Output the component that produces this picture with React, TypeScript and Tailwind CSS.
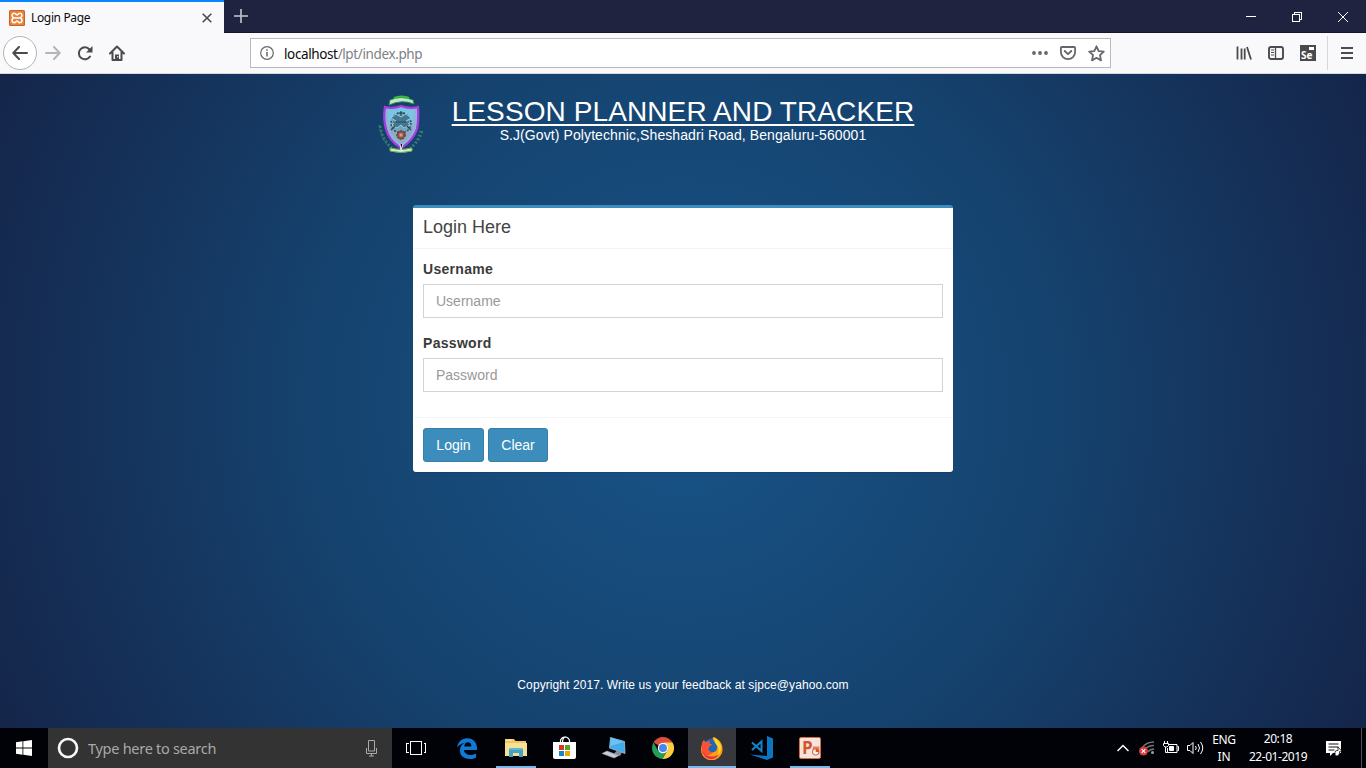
import React from "react";

type P = { className?: string; children: React.ReactNode };

const Task = ({ className = "", children }: P) => (
  <div className={`flex h-10 w-12 shrink-0 items-center justify-center ${className}`}>{children}</div>
);

const Running = ({ children }: { children: React.ReactNode }) => (
  <div className="flex h-10 w-12 shrink-0 flex-col items-center">
    <div className="flex h-[38px] items-center pt-0.5">{children}</div>
    <div className="h-0.5 w-10 bg-[#76b9ed]" />
  </div>
);

const TabStrip = () => (
  <div className="flex h-[33px] shrink-0 border-b border-[#15152a] bg-[#202340]">
    <div className="flex h-[33px] w-[224px] items-center border-t-2 border-[#0a84ff] bg-[#f9f9fb] pl-[9px]">
      <svg width="16" height="16" viewBox="0 0 16 16">
        <rect width="16" height="16" rx="1.5" fill="#c96327" />
        <rect x="1" y="1" width="14" height="14" rx="1" fill="#e8833a" />
        <path d="M5.2 7.8C2 6.8 2.6 3.2 5.2 3.3c1.7 0 1.8 1.5 2.8 1.5s1.100-1.500 2.800-1.500c2.600-.1 3.200 3.500 0 4.500 3.200 1 2.600 4.900 0 4.900-1.700 0-1.800-1.600-2.800-1.600s-1.100 1.600-2.800 1.600c-2.600 0-3.200-3.900 0-4.900ZM6 8h4" fill="none" stroke="#fff" strokeWidth="1.500" />
      </svg>
      <span className="ml-[6px] w-[160px] text-[12px] tracking-[-0.35px] text-[#0c0c0d]">Login Page</span>
      <svg className="ml-[11px]" width="10" height="10" viewBox="0 0 10 10">
        <path d="M.7.7l8.600 8.600M9.300.7L.7 9.300" stroke="#4a4a50" strokeWidth="1.600" />
      </svg>
    </div>
    <div className="flex w-8 items-center justify-center pl-0.5">
      <svg width="14" height="14" viewBox="0 0 14 14">
        <path d="M7 0v14M0 7h14" stroke="#c6c7d2" strokeWidth="1.600" />
      </svg>
    </div>
    <div className="flex-1" />
    <div className="flex items-center text-white">
      <svg className="w-[46px]" height="33" viewBox="0 0 46 33">
        <path d="M18 16.500h10" stroke="white" shapeRendering="crispEdges" />
      </svg>
      <svg className="w-[46px]" height="33" viewBox="0 0 46 33">
        <path d="M18.500 14.500h7v7h-7zM20.500 14v-1.500h7v7H26" fill="none" stroke="white" shapeRendering="crispEdges" />
      </svg>
      <svg className="w-[46px]" height="33" viewBox="0 0 46 33">
        <path d="M18 12l10 10M28 12l-10 10" stroke="white" />
      </svg>
    </div>
  </div>
);

const Toolbar = () => (
  <div className="flex h-[41px] shrink-0 items-center border-b border-[#d8d9dd] bg-[#f9f9fb]">
    <div className="flex w-[250px] items-center pl-[3px]">
      <div className="flex size-[34px] items-center justify-center rounded-full border border-[#b4b4b8] bg-white">
        <svg width="16" height="14" viewBox="0 0 16 14">
          <path d="M15 7H1.500M7 1L1.300 7 7 13" fill="none" stroke="#4a4a4f" strokeWidth="2" strokeLinecap="round" strokeLinejoin="round" />
        </svg>
      </div>
      <svg className="ml-2" width="16" height="14" viewBox="0 0 16 14">
        <path d="M1 7h13.500M9 1l5.700 6L9 13" fill="none" stroke="#b5b5b9" strokeWidth="2" strokeLinecap="round" strokeLinejoin="round" />
      </svg>
      <svg className="ml-[16px]" width="16" height="16" viewBox="0 0 16 16">
        <path d="M13 11.500A6 6 0 1 1 12.500 4.500" fill="none" stroke="#4a4a4f" strokeWidth="2" strokeLinecap="round" />
        <path d="M15.500 1v6.500H9z" fill="#4a4a4f" />
      </svg>
      <svg className="ml-[16px]" width="16" height="16" viewBox="0 0 16 16">
        <path d="M1 8.500L8 1.500l7 7M3.500 7.500V15h9V7.500" fill="none" stroke="#4a4a4f" strokeWidth="2" strokeLinecap="round" strokeLinejoin="round" />
        <path d="M6 9.500h4V15H6z" fill="#4a4a4f" />
        <path d="M8.300 11h1v1.500h-1z" fill="#fff" />
      </svg>
    </div>
    <div className="flex h-[30px] w-[861px] items-center border border-[#b9b9be] bg-white pl-[9px] pr-[5px]">
      <svg width="14" height="14" viewBox="0 0 14 14">
        <circle cx="7" cy="7" r="6.300" fill="none" stroke="#66666b" strokeWidth="1.200" />
        <path d="M7 6v4.500M7 3.200v1.600" stroke="#66666b" strokeWidth="1.500" />
      </svg>
      <span className="ml-[10px] flex-1 pt-[2px] text-[13.500px] tracking-[-0.380px] text-[#808085]">
        <span className="text-[#0c0c0d]">localhost</span>/lpt/index.php
      </span>
      <svg width="16" height="16" viewBox="0 0 16 16" fill="#66666b">
        <circle cx="2" cy="8" r="1.900" />
        <circle cx="8" cy="8" r="1.900" />
        <circle cx="14" cy="8" r="1.900" />
      </svg>
      <svg className="ml-3" width="16" height="16" viewBox="0 0 16 16" fill="none" stroke="#66666b" strokeWidth="1.800" strokeLinejoin="round" strokeLinecap="round">
        <path d="M1.800 2h12.400q.9 0 .9.900V7A7.100 7.100 0 0 1 .9 7V2.900Q.9 2 1.800 2zM4.700 6L8 9.200 11.300 6" />
      </svg>
      <svg className="ml-3" width="17" height="17" viewBox="0 0 17 17" fill="none" stroke="#66666b" strokeWidth="1.800" strokeLinejoin="round">
        <path d="M8.500 1.300l2.200 4.800 5.100.6-3.800 3.500 1 5.200-4.500-2.600L4 15.400l1-5.200-3.800-3.500 5.100-.6z" />
      </svg>
    </div>
    <div className="flex flex-1 items-center pl-[125px]">
      <svg width="16" height="16" viewBox="0 0 16 16" stroke="#4a4a4f" strokeWidth="1.800">
        <path d="M1.500 1.500v13M5.500 3.500v11M8.700 3.500v11M11 2l4 12.500" />
      </svg>
      <svg className="ml-4" width="16" height="16" viewBox="0 0 16 16" fill="none" stroke="#4a4a4f">
        <rect x="1" y="2" width="14" height="12" rx="2" strokeWidth="1.900" />
        <path d="M7.500 2v12" strokeWidth="1.300" />
        <path d="M3 5h3M3 7.500h3M3 10h3" />
      </svg>
      <div className="ml-4 flex size-4 flex-col items-start bg-[#4a4a4d]">
        <div className="ml-[9px] mt-[2px] h-[3px] w-[5px] shrink-0 bg-white" />
        <span className="ml-px font-['Open_Sans',sans-serif] text-[10px] font-bold leading-[11px] text-white">Se</span>
      </div>
      <div className="ml-[11px] h-[34px] w-px bg-[#d7d7db]" />
      <svg className="ml-[13px]" width="12" height="14" viewBox="0 0 12 14" stroke="#4a4a4f" strokeWidth="2">
        <path d="M0 2h12M0 7h12M0 12h12" />
      </svg>
    </div>
  </div>
);

const Crest = () => (
  <svg width="46" height="60" viewBox="0 0 46 60">
    <path d="M12 5q11-5 23 0l1 4q-12-5-25 1z" fill="#bfe6ce" stroke="#2e9445" />
    <path d="M16 3q8-3 15 0" fill="none" stroke="#38bd3c" strokeWidth="2" />
    <path d="M7 12q8 2 16-1 9 3 17 1 1 12-1 22-4 12-16 19-12-7-15-19-3-11-1-22z" fill="#8fb4d8" stroke="#a43de0" strokeWidth="2.300" />
    <path d="M10 15q7 1 13-2 7 3 13 2l-1 13q-10-7-24 1z" fill="#75c9e8" />
    <path d="M11 31q12 7 25-1-1 11-13 19Q12 40 11 31z" fill="#93a8c4" />
    <circle cx="23" cy="28" r="10" fill="#6fa5bd" stroke="#2c5268" strokeWidth="1.500" strokeDasharray="2 1.500" />
    <path d="M13 23l5-4 5 3 5-3 5 4-5 3 4 4-6 3-3-3-4 3-5-3 4-4z" fill="#3f7794" stroke="#b2d3d8" strokeWidth=".8" />
    <path d="M19 18h8M23 16v5M13 35l4-4M33 35l-4-4M15 27h16" stroke="#28495a" strokeWidth="1.200" />
    <circle cx="23" cy="40" r="4.200" fill="#8b5547" stroke="#44292d" strokeDasharray="2 1" />
    <path d="M21.500 38.500h3v3h-3z" fill="#d39d89" />
    <path d="M2 31q2 14 12 22M44 36q-3 11-12 17" fill="none" stroke="#377e67" strokeWidth="2.800" strokeDasharray="2 2" />
    <path d="M1 30q2 14 11 23M42 36q-3 11-10 17" fill="none" stroke="#50998a" strokeDasharray="1 3" />
    <path d="M12 53q11 3 22 0v3q-11 3-22 0z" fill="#d7eadf" stroke="#6bae46" />
    <path d="M22 49l1 6 2-6" stroke="#e8f5ff" />
  </svg>
);

const Field = ({ label, type }: { label: string; type: string }) => (
  <div className="flex flex-col">
    <label className="mb-[5px] text-[14px] font-bold leading-5 tracking-[0.3px] text-[#3a3a3a]">{label}</label>
    <input
      type={type}
      placeholder={label}
      className="h-[34px] w-full border border-[#d2d3d8] bg-white px-3 text-[14px] text-[#555] outline-none placeholder:text-[#999] placeholder:opacity-100"
    />
  </div>
);

const Page = () => (
  <main className="flex h-[654px] shrink-0 flex-col items-center bg-[radial-gradient(circle_at_center,#185488_0%,#15426e_50%,#15254a_100%)] font-['Liberation_Sans',Arial,sans-serif]">
    <header className="flex h-[131px] w-[610px] items-start pt-[21px]">
      <Crest />
      <div className="ml-[27px] flex w-[464px] flex-col items-center whitespace-nowrap text-white">
        <h1 className="h-[32px] text-[28px] leading-[33px] tracking-[0.1px] underline decoration-2 underline-offset-[3px]">LESSON PLANNER AND TRACKER</h1>
        <p className="text-[14px] leading-[16px] tracking-[0.09px]">S.J(Govt) Polytechnic,Sheshadri Road, Bengaluru-560001</p>
      </div>
    </header>
    <section className="flex h-[267px] w-[540px] flex-col rounded-[3px] border-t-[3px] border-[#3c8dbc] bg-white shadow-[0_1px_1px_rgba(0,0,0,0.1)]">
      <h2 className="flex h-[41px] items-center border-b border-[#f4f4f4] px-[10px] pb-[2px] text-[18px] text-[#444]">Login Here</h2>
      <div className="flex h-[168px] flex-col gap-[15px] px-[10px] pt-[10px]">
        <Field label="Username" type="text" />
        <Field label="Password" type="password" />
      </div>
      <div className="flex gap-1 border-t border-[#f4f4f4] p-[10px] text-[14px] text-white">
        <button className="h-[34px] w-[61px] rounded-[3px] border border-[#367fa9] bg-[#3c8dbc]">Login</button>
        <button className="h-[34px] w-[60px] rounded-[3px] border border-[#367fa9] bg-[#3c8dbc]">Clear</button>
      </div>
    </section>
    <footer className="mt-[205px] text-[12px] leading-4 tracking-[0.09px] text-white">Copyright 2017. Write us your feedback at sjpce@yahoo.com</footer>
  </main>
);

const Taskbar = () => (
  <div className="flex h-10 shrink-0 items-center bg-[#010208]">
    <Task>
      <svg width="16" height="16" viewBox="0 0 16 16" fill="white">
        <path d="M0 2.300L6.500 1.300V7.500H0zM7.300 1.200L16 0V7.500H7.300zM0 8.400h6.500v6.300L0 13.800zM7.300 8.400H16V16l-8.700-1.200z" />
      </svg>
    </Task>
    <div className="flex h-10 w-[344px] items-center bg-[#333] pl-[9px] pr-[14px]">
      <svg width="22" height="22" viewBox="0 0 22 22">
        <circle cx="11" cy="11" r="9" fill="none" stroke="#f6f6f6" strokeWidth="2.700" />
      </svg>
      <span className="ml-[9px] flex-1 pt-[2px] text-[14.500px] tracking-[-0.280px] text-[#a9a9a9]">Type here to search</span>
      <svg width="13" height="17" viewBox="0 0 13 17" fill="none" stroke="#aaa">
        <path d="M3.500.5h6v10.500h-6zM1.500 8v5.500h10V8M6.500 13.500v2.500M4 16h5" />
      </svg>
    </div>
    <Task>
      <svg width="20" height="15" viewBox="0 0 20 15" fill="none" stroke="white" shapeRendering="crispEdges">
        <path d="M4.500.5h11v13h-11zM2.500 2.500h-2v9h2M17.500 2.500h2v9h-2" />
      </svg>
    </Task>
    <div className="ml-[3px] flex gap-px">
      <Task>
        <svg width="20" height="21" viewBox="0 0 20 21">
          <path d="M0 9.600C.8 3.800 4.800.2 10.200.2c6.200 0 9.800 4.500 9.800 10V12H7c.2 3.500 3.600 5 6.500 5 2.200 0 4-.6 5.500-1.500v4c-1.700 1-4 1.500-6.400 1.500-6 0-9.700-3.300-9.700-8.400 0-3.600 2-6.300 5.100-7.800C5.500 5.300 2.200 6.600 0 9.600zM7.200 8.600h7.200c0-3-1.500-4.400-3.500-4.400-2.200 0-3.500 1.900-3.700 4.400z" fill="#0e7bd8" />
        </svg>
      </Task>
      <Running>
        <svg width="22" height="20" viewBox="0 0 22 20">
          <path d="M0 1h9l1.500 2H21v15H0z" fill="#edc95f" />
          <path d="M0 5h22v13H0z" fill="#f8df93" />
          <path d="M1 2h6" stroke="#fff1bb" />
          <path d="M4 19v-7.500q0-1.500 1.500-1.500h11q1.500 0 1.500 1.500V19h-4v-4H8v4z" fill="#43a4c7" />
          <path d="M5 11h12" stroke="#78cadc" />
        </svg>
      </Running>
      <Task>
        <svg width="24" height="24" viewBox="0 0 24 24">
          <path d="M7.500 7V5c0-2 2-4 4.500-4s4.500 2 4.500 4v2M9.500 7c0-5 1.500-6 3.500-6" fill="none" stroke="white" strokeWidth="1.200" />
          <path d="M0 6h23v15q0 2-2 2H2q-2 0-2-2z" fill="white" />
          <path d="M6 9h5v5H6z" fill="#d63b22" />
          <path d="M12 9h5v5h-5z" fill="#57a434" />
          <path d="M6 15h5v5H6z" fill="#1686cb" />
          <path d="M12 15h5v5h-5z" fill="#eba900" />
        </svg>
      </Task>
      <Task>
        <svg width="24" height="24" viewBox="0 0 24 24">
          <path d="M8.500 1.500L22.500 5.500 23 17.500 7.500 12z" fill="#43abea" stroke="#a7d5f0" strokeWidth=".7" />
          <path d="M9 2l13 4-14 4z" fill="#6bc3f4" />
          <path d="M15 14.500l-3 3 6 2.500 2-3.500z" fill="#87939c" />
          <path d="M0 17.500L5 15l12 4.500-5 2.500z" fill="#d7dce0" stroke="#8f9aa2" strokeWidth=".5" />
          <path d="M2.500 17l11 4M5 16l10 4" stroke="#a2adb4" strokeWidth=".6" />
        </svg>
      </Task>
      <Task>
        <svg width="22" height="22" viewBox="0 0 22 22">
          <path d="M11 11L1.500 5.500A11 11 0 0 1 20.500 5.500z" fill="#dd4e40" />
          <path d="M1.500 5.500A11 11 0 0 0 10.500 22l4.800-8.500L6 13.500z" fill="#269c59" />
          <path d="M20.500 5.500A11 11 0 0 1 10.500 22l5.500-9.500L12 5.500z" fill="#fdcd40" />
          <circle cx="11" cy="11" r="5.200" fill="white" />
          <circle cx="11" cy="11" r="4" fill="#4787ee" />
        </svg>
      </Task>
      <div className="flex h-10 w-12 flex-col items-center bg-[#36383d]">
        <div className="flex h-[38px] items-center pt-0.5">
          <svg width="24" height="24" viewBox="0 0 24 24">
            <circle cx="12" cy="12" r="9.500" fill="#2364b4" />
            <path d="M13 1c5 1 9.500 6 9.500 11.500A10.800 10.800 0 1 1 1.700 9.500q.5-4 2.400-5.500l.8 3q2-2 5-1.500l-1 2 3 1-3 2-1 3q2 3.500 6 2.500 3-1 3.400-4Q18 7 14 5q-2-2-1-4z" fill="#ff9d13" />
            <path d="M1.700 9.500q.5-4 2.400-5.500l.8 3q2-2 5-1.500l-1 2 3 1-3 2-1 3q1.500 3 5.500 2.700-4 5-11 1.500Q1 14 1.700 9.500z" fill="#ff5035" />
            <path d="M2 14q3 7 11 6.500 5-1 6-3-2 5.500-8 5.700Q4 23 2 14z" fill="#e8304f" />
            <path d="M14 1.500q6 3 7 9 .5 6-4 9 3-5 0-10-3-3-3-8z" fill="#ffd52a" />
          </svg>
        </div>
        <div className="h-0.5 w-12 bg-[#76b9ed]" />
      </div>
      <Task>
        <svg width="24" height="24" viewBox="0 0 24 24">
          <path d="M18 0l6 2.500v19L18 24 1 18.500l17 1.500z" fill="#0b76c4" />
          <path d="M3 6.500l9.500 8.500V5.500L3 14" fill="none" stroke="#1683cb" strokeWidth="2" />
        </svg>
      </Task>
      <Running>
        <div className="flex size-[22px] items-start rounded-[2px] border border-[#d56c46] bg-[#f6e4da] pl-[2px] pt-px">
          <span className="font-['Open_Sans',sans-serif] text-[17px] font-bold leading-[18px] text-[#d3542d]">P</span>
          <svg className="-ml-px mt-[6px]" width="9" height="13" viewBox="0 0 9 13">
            <path d="M1 1h7v8H0z" fill="#e78259" />
            <circle cx="4" cy="7" r="3.500" fill="#f7f0ec" stroke="#d3542d" />
            <path d="M4 7V3.500A3.500 3.500 0 0 1 7.500 7z" fill="#d3542d" />
          </svg>
        </div>
      </Running>
    </div>
    <div className="flex-1" />
    <div className="flex h-10 items-center">
      <svg width="12" height="8" viewBox="0 0 12 8" fill="none" stroke="white" strokeWidth="1.500">
        <path d="M.5 7L6 1.500 11.500 7" />
      </svg>
      <svg className="ml-[10px]" width="16" height="16" viewBox="0 0 16 16" fill="none">
        <path d="M3 8Q7 2 15 2M6 9.500Q9 5.500 15 5.500M9 12Q11 9 15 9" stroke="#72767b" strokeWidth="1.300" />
        <circle cx="13.500" cy="12.500" r="1.500" fill="#9ca0a4" />
        <circle cx="4.500" cy="11" r="4.500" fill="#d83b40" />
        <path d="M2.700 9.200l3.600 3.600M6.300 9.200l-3.600 3.600" stroke="white" strokeWidth="1.200" />
      </svg>
      <svg className="ml-[8px]" width="16" height="14" viewBox="0 0 16 14" fill="none" stroke="white">
        <path d="M6 3.500h8v8H4.500V7M14.500 5.500h1v4h-1M2.500 6v5.500h2M1.500 0v2.500M4.500 0v2.500M.5 2.500h5v2L4 6H2L.5 4.500z" />
        <path d="M6.500 5.500h4v4h-4z" fill="white" />
      </svg>
      <svg className="ml-[8px]" width="17" height="14" viewBox="0 0 17 14" fill="none" stroke="white">
        <path d="M.5 4.500h2.500l3-3v11l-3-3H.5zM8.500 5q1.500 2 0 4M11 3q3 4 0 8M13.500 1q4.500 6 0 12" />
      </svg>
      <div className="ml-[4px] flex w-[32px] flex-col items-center text-[12px] leading-[17px] text-white">
        <span className="tracking-[-0.4px]">ENG</span>
        <span>IN</span>
      </div>
      <div className="ml-[5px] flex w-[66px] flex-col items-center text-[12px] leading-[18px] tracking-[-0.450px] text-white">
        <span>20:18</span>
        <span className="whitespace-nowrap">22-01-2019</span>
      </div>
      <svg className="ml-[14px]" width="18" height="17" viewBox="0 0 18 17">
        <path d="M1 1h15v12H8l-3 3v-3H1z" fill="white" />
        <path d="M3.500 4h10M3.500 7h10M3.500 10h6" stroke="#111" />
        <path d="M10 12.500q0-2 2-2h1V7q2 2 3.500 4-1 1-2 .5v2q-1 3-3 2.500-2-1-1.500-3.500z" fill="white" stroke="#111" strokeWidth=".8" />
      </svg>
      <div className="ml-[18px] mr-1 h-10 w-px bg-[#505158]" />
    </div>
  </div>
);

export default function App() {
  return (
    <div className="flex h-[768px] w-[1366px] flex-col overflow-hidden font-['Noto_Sans','Open_Sans',sans-serif]">
      <TabStrip />
      <Toolbar />
      <Page />
      <Taskbar />
    </div>
  );
}
